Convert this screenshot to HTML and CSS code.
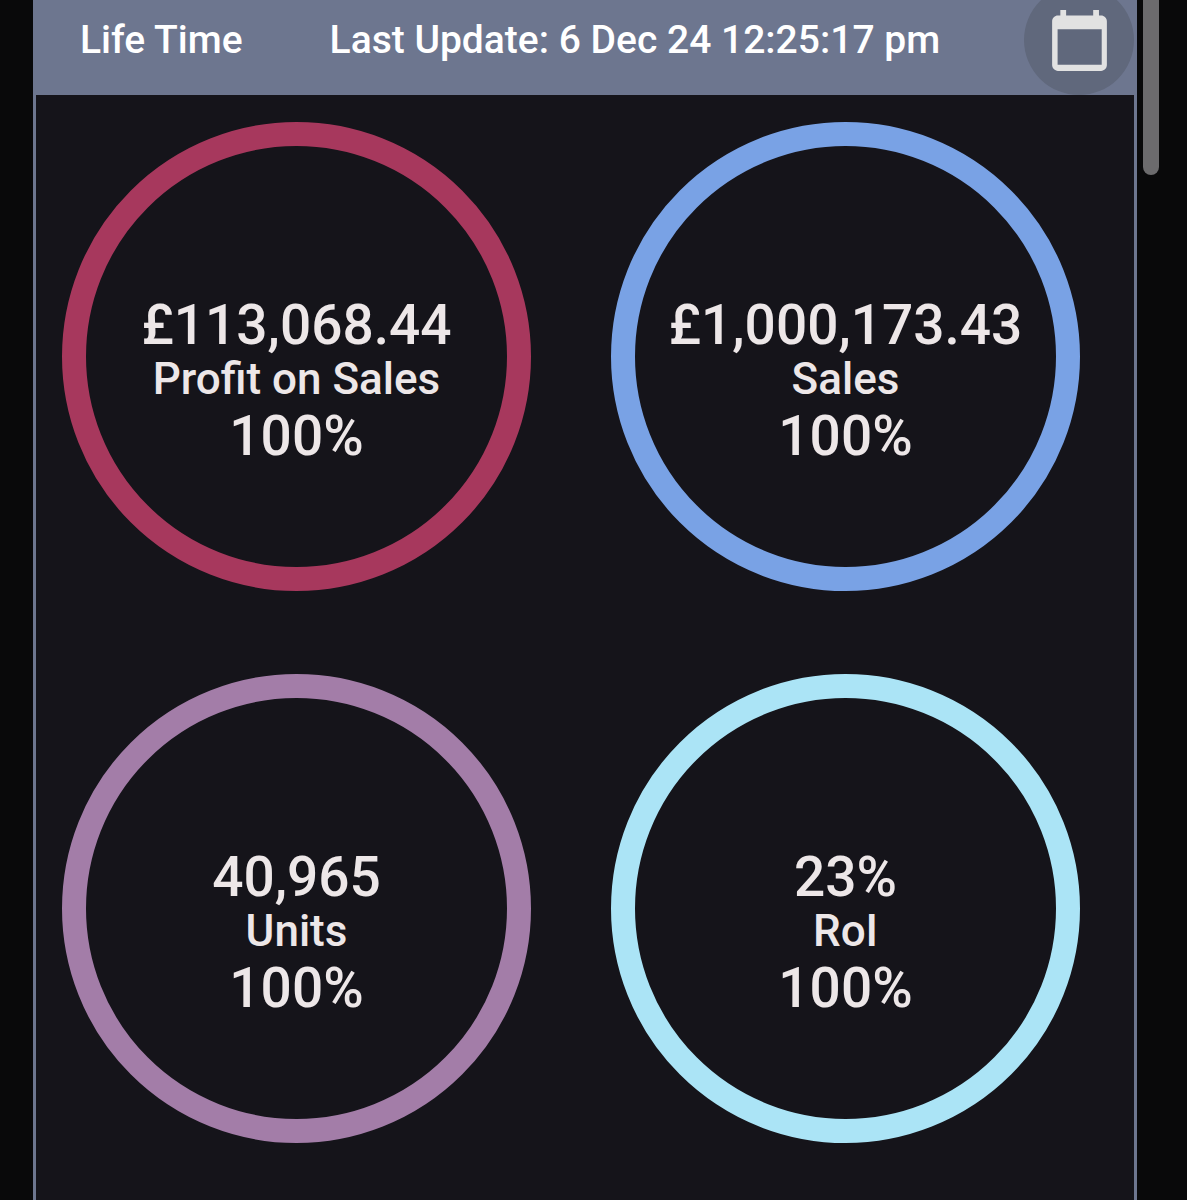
FILE: index.html
```html
<!DOCTYPE html>
<html lang="en">
<head>
  <meta charset="UTF-8">
  <meta name="viewport" content="width=device-width, initial-scale=1.0">
  <title>Life Time</title>
  <link rel="stylesheet" href="styles.css">
</head>
<body>
  <main class="panel">
    <header class="panel-header">
      <h1 class="period">Life Time</h1>
      <p class="last-update">Last Update: 6 Dec 24 12:25:17 pm</p>
      <button type="button" class="date-button" aria-label="Choose dates">
        <svg viewBox="0 0 24 24" aria-hidden="true"><path fill-rule="evenodd" d="M5.7 1h1.9v1.8h8.9V1h1.9v1.8h.7c1 0 1.9.8 1.9 1.9v14.4c0 1-.8 1.9-1.9 1.9H4.9C3.900 21 3 20.100 3 19.100V4.700c0-1 .9-1.900 1.900-1.900h.8zM4.800 7.300V19h14.500V7.300z"/></svg>
      </button>
    </header>

    <div class="stats">
      <section class="stat profit">
        <p class="value">£113,068.44</p>
        <h2 class="label">Profit on Sales</h2>
        <p class="percent">100%</p>
      </section>
      <section class="stat sales">
        <p class="value">£1,000,173.43</p>
        <h2 class="label">Sales</h2>
        <p class="percent">100%</p>
      </section>
      <section class="stat units">
        <p class="value">40,965</p>
        <h2 class="label">Units</h2>
        <p class="percent">100%</p>
      </section>
      <section class="stat roi">
        <p class="value">23%</p>
        <h2 class="label">RoI</h2>
        <p class="percent">100%</p>
      </section>
    </div>
  </main>
  <div class="scroll-thumb"></div>
</body>
</html>
```
FILE: styles.css
```css
*, *::before, *::after { box-sizing: border-box; }
body { margin: 0; padding: 0 28px 0 33px; display: flex; align-items: flex-start; gap: 6px; min-height: 100vh; overflow-x: hidden; background-color: #09090a; font-family: Roboto, sans-serif; font-weight: 500; color: #ede7e8; }
h1, h2, p { margin: 0; font-weight: 500; }

.panel { flex: 1; min-width: 0; min-height: 100vh; border: solid #6d768f; border-width: 0 3px; background-color: #15141a; }

/* Header, partly scrolled off the top */
.panel-header { display: flex; align-items: center; margin-top: -15px; padding-left: 44px; background-color: #6d768f; color: #fff; }
.period, .last-update { font-size: 39px; line-height: 48px; white-space: nowrap; }
.last-update { margin-left: 87px; }
.date-button { display: flex; align-items: center; justify-content: center; width: 110px; height: 110px; margin-left: auto; padding: 6px 0 0; border: 0; border-radius: 50%; background-color: #60687c; cursor: pointer; }
.date-button svg { width: 73px; height: 73px; fill: #e2e2e2; }

/* Stat rings */
.stats { display: grid; grid-template-columns: 1fr 1fr; gap: 83px 80px; padding: 27px 54px 56px 26px; }
.stat { display: flex; flex-direction: column; align-items: center; justify-content: center; aspect-ratio: 1; padding-top: 50px; border: 24px solid; border-radius: 50%; white-space: nowrap; }
.value, .label, .percent { color: #ede7e8; }
.value { font-size: 55px; line-height: 56px; }
.label { font-size: 44px; line-height: 52px; }
.percent { font-size: 55px; line-height: 62px; }
.profit { border-color: #a7385d; }
.sales { border-color: #79a2e5; }
.units { border-color: #a37da8; }
.roi { border-color: #abe4f6; }

.scroll-thumb { width: 16px; height: 175px; border-radius: 0 0 8px 8px; background-color: #6c6b6d; }
```
